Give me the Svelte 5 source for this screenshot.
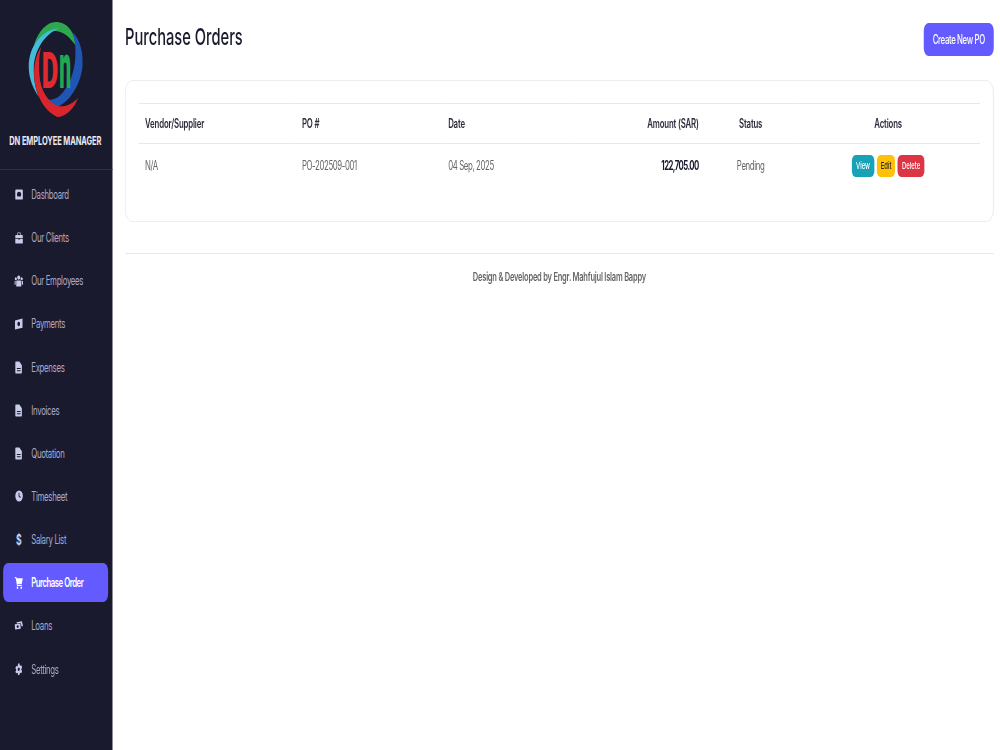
<script>
    const icons = {
        gauge: 'M2 .5h10a1.500 1.500 0 0 1 1.500 1.500v10a1.500 1.500 0 0 1-1.500 1.500H2A1.500 1.500 0 0 1 .5 12V2A1.500 1.500 0 0 1 2 .5zm5 3a3.600 3.600 0 0 0-3.600 3.600c0 .9.300 1.700.8 2.400h5.600c.5-.7.8-1.500.8-2.400A3.600 3.600 0 0 0 7 3.500z',
        briefcase: 'M5 .5h4a1 1 0 0 1 1 1v2h2.500a1 1 0 0 1 1 1V7h-13V4.500a1 1 0 0 1 1-1H4v-2a1 1 0 0 1 1-1zm0 1v2h4v-2zM.5 8H6v1h2V8h5.500v4.500a1 1 0 0 1-1 1h-11a1 1 0 0 1-1-1z',
        users: 'M7 .5a2.500 2.500 0 1 1 0 5 2.500 2.500 0 0 1 0-5zM2.300 2.500a1.800 1.800 0 1 1 0 3.600 1.800 1.800 0 0 1 0-3.600zm9.400 0a1.800 1.800 0 1 1 0 3.600 1.800 1.800 0 0 1 0-3.600zM4 6.500h6a1 1 0 0 1 1 1v6H3v-6a1 1 0 0 1 1-1zM0 7h2v4.500H.8a.8.8 0 0 1-.8-.8zm12 0h2v3.700a.8.8 0 0 1-.8.8H12z',
        money: 'M1 3 13 .5v11L1 13.500zM7 4.500a2.200 2.500 0 1 0 0 5 2.200 2.500 0 0 0 0-5z',
        file: 'M2.500 .5h5.500l4 4V12.500a1 1 0 0 1-1 1h-8.500a1 1 0 0 1-1-1v-11a1 1 0 0 1 1-1zm1.500 7v1h6v-1zm0 2.500v1h6v-1z',
        clock: 'M7 .5a6.500 6.500 0 1 1 0 13A6.500 6.500 0 0 1 7 .5zM6.200 3.200v4.300l3 1.800.8-1.200-2.300-1.400V3.200z',
        cart: 'M.5 1h2.700l.4 1.500H13.500l-1.700 6H5l.3 1h6.400v1.300H4.200L2.200 2.300H.5zM5 11.300a1.300 1.300 0 1 1 0 2.600 1.300 1.300 0 0 1 0-2.600zm6 0a1.300 1.300 0 1 1 0 2.600 1.300 1.300 0 0 1 0-2.600z',
        loans: 'M3.500 3 12 1.500l1.800 6-2.300.7L10 3.900 4 4.800zM.5 5.500l9-.7.7 6.200-9 1zM5.300 6.600a1.700 1.800 0 1 0 0 3.600 1.700 1.800 0 0 0 0-3.600z',
        gear: 'M5.600.5h2.800l.4 1.900 1.300.8 1.800-.6 1.400 2.400-1.400 1.300v1.400l1.400 1.300-1.400 2.400-1.800-.6-1.300.8-.4 1.900H5.600l-.4-1.900-1.300-.8-1.800.6L.7 9.800l1.400-1.300V7.100L.7 5.800l1.400-2.400 1.800.6 1.300-.8zM7 5a2 2 0 1 0 0 4 2 2 0 0 0 0-4z'
    };

    const nav = [
        { label: 'Dashboard', icon: 'gauge', w: 13, h: 11 },
        { label: 'Our Clients', icon: 'briefcase', w: 13, h: 12 },
        { label: 'Our Employees', icon: 'users', w: 16, h: 12 },
        { label: 'Payments', icon: 'money', w: 16, h: 12 },
        { label: 'Expenses', icon: 'file', w: 14, h: 13 },
        { label: 'Invoices', icon: 'file', w: 14, h: 13 },
        { label: 'Quotation', icon: 'file', w: 14, h: 13 },
        { label: 'Timesheet', icon: 'clock', w: 13, h: 12 },
        { label: 'Salary List', icon: 'dollar' },
        { label: 'Purchase Order', icon: 'cart', w: 14, h: 13 },
        { label: 'Loans', icon: 'loans', w: 16, h: 11 },
        { label: 'Settings', icon: 'gear', w: 12, h: 12.5 }
    ];
    nav[9].active = true;
</script>

<!-- the reference is a wide page squeezed to 1000px, so the layout is built at 1600 and squeezed the same way -->
<div class="layout">
    <aside class="sidebar">
        <div class="brand">
            <svg class="logo" viewBox="85 65 160 285" preserveAspectRatio="none">
                <path d="M100 135C115 90 140 65 165 65 200 65 222 95 224 135 208 112 190 94 165 92 140 90 118 106 100 135Z" fill="#2ea84f"/>
                <path d="M115 290C95 260 85 230 85 200 85 140 120 90 175 84 132 102 102 150 100 200 99 235 105 265 115 290Z" fill="#43bcd8"/>
                <path d="M215 95C240 120 247 160 245 195 242 250 205 310 165 322 150 322 140 312 130 295 150 304 172 296 190 272 212 242 224 200 224 160 224 135 222 115 215 95Z" fill="#1f56b4"/>
                <path d="M122 140C105 165 98 200 102 240 108 290 135 335 170 350 195 350 220 325 232 292 215 312 190 322 170 316 142 306 119 268 117 225 115 195 115 165 122 140Z" fill="#d9262c"/>
                <text class="logo-d" transform="translate(124 262) scale(.5 1)">D</text>
                <text class="logo-n" transform="translate(176 264) scale(.33 1)">n</text>
            </svg>
            <div class="brand-name">DN EMPLOYEE MANAGER</div>
        </div>
        <nav class="menu">
            {#each nav as item}
                <a class="menu-item" class:active={item.active} href="#top">
                    <span class="menu-icon">
                        {#if item.icon === 'dollar'}
                            <span class="dollar">$</span>
                        {:else}
                            <svg viewBox="0 0 14 14" width={item.w} height={item.h} preserveAspectRatio="none">
                                <path d={icons[item.icon]} fill="currentColor" fill-rule="evenodd"/>
                            </svg>
                        {/if}
                    </span>
                    <span>{item.label}</span>
                </a>
            {/each}
        </nav>
    </aside>

    <main class="content">
        <header class="page-head">
            <h1>Purchase Orders</h1>
            <button class="btn-create">Create New PO</button>
        </header>

        <section class="card">
            <table>
                <thead>
                    <tr>
                        <th class="c-vendor">Vendor/Supplier</th>
                        <th class="c-po">PO #</th>
                        <th class="c-date">Date</th>
                        <th class="c-amount">Amount (SAR)</th>
                        <th class="c-status">Status</th>
                        <th class="c-actions">Actions</th>
                    </tr>
                </thead>
                <tbody>
                    <tr>
                        <td>N/A</td>
                        <td>PO-202509-001</td>
                        <td>04 Sep, 2025</td>
                        <td class="c-amount"><strong>122,705.00</strong></td>
                        <td class="c-status">Pending</td>
                        <td class="c-actions">
                            <div class="actions">
                                <button class="btn view">View</button>
                                <button class="btn edit">Edit</button>
                                <button class="btn del">Delete</button>
                            </div>
                        </td>
                    </tr>
                </tbody>
            </table>
        </section>

        <footer class="foot">Design &amp; Developed by Engr. Mahfujul Islam Bappy</footer>
    </main>
</div>

<style>
    :global(body) {
        margin: 0;
        background: #fff;
        overflow: hidden;
        font-family: "Inter", "Liberation Sans", sans-serif;
    }

    .layout {
        display: flex;
        width: 1600px;
        height: 750px;
        transform: scaleX(0.625);
        transform-origin: 0 0;
    }

    .sidebar {
        width: 180px;
        flex-shrink: 0;
        background: #1a1a2e;
    }

    .brand {
        height: 170px;
        border-bottom: 1px solid #2e2e44;
        box-sizing: border-box;
        display: flex;
        flex-direction: column;
        align-items: center;
        padding-top: 22px;
    }

    .logo {
        display: block;
        width: 86px;
        height: 95px;
        margin-left: -2px;
        overflow: visible;
    }

    .logo-d, .logo-n {
        font-family: "Roboto", sans-serif;
        font-weight: 900;
    }

    .logo-d {
        font-size: 152px;
        fill: #e02a2e;
    }

    .logo-n {
        font-size: 190px;
        fill: #20a850;
    }

    .brand-name {
        margin-top: 17px;
        margin-left: -3px;
        font-size: 12px;
        line-height: 14px;
        font-weight: 700;
        letter-spacing: -0.15px;
        color: #e8e8f0;
        white-space: nowrap;
    }

    .menu {
        display: flex;
        flex-direction: column;
        gap: 4.15px;
        padding: 5px 7px 0 5px;
    }

    .menu-item {
        height: 39px;
        box-sizing: border-box;
        display: flex;
        align-items: center;
        gap: 13px;
        padding-left: 18px;
        border-radius: 8px;
        font-size: 12.500px;
        letter-spacing: -0.5px;
        color: #a9a9c6;
        text-decoration: none;
        white-space: nowrap;
    }

    .menu-item.active {
        background: #635bff;
        color: #fff;
        font-weight: 600;
        letter-spacing: -0.8px;
    }

    .menu-icon {
        width: 14px;
        display: flex;
        justify-content: center;
        color: #c8cce8;
    }

    .active .menu-icon {
        color: #fff;
    }

    .dollar {
        font-weight: 700;
        font-size: 14px;
        line-height: 14px;
    }

    .content {
        flex: 1;
        padding: 23px 10px 0 20px;
        min-width: 0;
    }

    .page-head {
        display: flex;
        justify-content: space-between;
        align-items: flex-start;
        height: 57px;
    }

    h1 {
        margin: 0;
        font-size: 23.500px;
        line-height: 27px;
        font-weight: 500;
        color: #1a1a2e;
    }

    .btn-create {
        width: 112px;
        height: 33px;
        padding: 0;
        border: 0;
        border-radius: 8px;
        background: #635bff;
        color: #fff;
        font: 500 12.500px "Inter", sans-serif;
        letter-spacing: -0.6px;
    }

    .card {
        height: 142px;
        box-sizing: border-box;
        border: 1px solid #e8e8e8;
        border-radius: 12px;
        padding: 22px 21px 0 21px;
    }

    table {
        width: 100%;
        border-collapse: collapse;
        table-layout: fixed;
        font-size: 12.500px;
    }

    th {
        box-sizing: border-box;
        height: 40px;
        padding: 0 10px;
        text-align: left;
        font-weight: 600;
        letter-spacing: -0.25px;
        color: #2b2b3a;
        border-top: 1px solid #e8e8e8;
        border-bottom: 1px solid #e8e8e8;
    }

    td {
        height: 43px;
        padding: 0 10px;
        color: #666;
        letter-spacing: -0.6px;
    }

    td strong {
        font-weight: 700;
        color: #1a1a2e;
        letter-spacing: -0.9px;
    }

    .c-vendor { width: 251px; }
    .c-po { width: 234px; }
    .c-date { width: 210px; }
    .c-amount { width: 211px; text-align: right; }
    .c-status { width: 146px; text-align: center; }
    .c-actions { text-align: center; }

    .actions {
        display: flex;
        justify-content: center;
        gap: 4px;
    }

    .btn {
        height: 22px;
        padding: 0 7px;
        border: 0;
        border-radius: 6px;
        font: 500 9.500px "Inter", sans-serif;
        color: #fff;
    }

    .view { background: #17a2b8; }
    .edit { background: #ffc107; color: #212529; padding: 0 6px; }
    .del { background: #dc3545; }

    .foot {
        margin-top: 31px;
        padding-top: 16px;
        border-top: 1px solid #e8e8e8;
        text-align: center;
        font-size: 12px;
        line-height: 13px;
        font-weight: 600;
        letter-spacing: -0.35px;
        color: #666;
    }
</style>
